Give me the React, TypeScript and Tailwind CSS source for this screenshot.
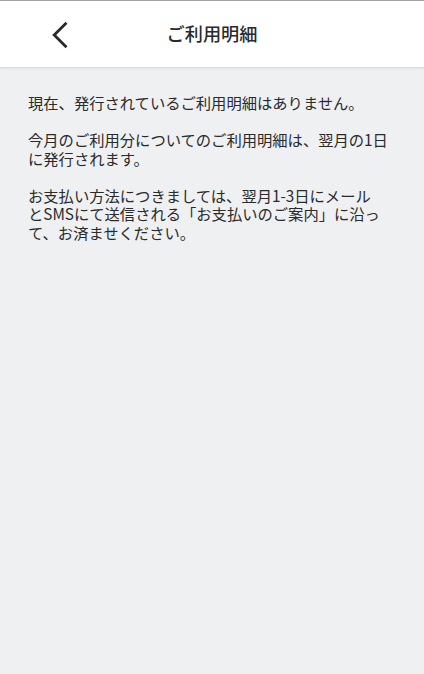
import React from "react";

export default function App() {
  const font = {
    fontFamily: '"Noto Sans CJK JP", "Noto Sans", sans-serif',
  };

  return (
    <div className="min-h-[674px] flex flex-col bg-[#eff0f2]" style={font}>
      {/* header */}
      <header className="h-[68px] bg-white border-t border-[#a3a3a3] border-b border-b-[#dcdcdc] shadow-[0_1px_2px_rgba(0,0,0,0.06)] relative flex items-center justify-center">
        <button className="absolute left-[50px] top-[19px] w-[20px] h-[30px] flex items-center justify-center">
          <svg width="18" height="28" viewBox="0 0 18 28" fill="none">
            <path
              d="M15.5 1.8 L3.2 14 L15.5 26.2"
              stroke="#2a2a2a"
              strokeWidth="2.8"
              strokeLinecap="butt"
              strokeLinejoin="miter"
            />
          </svg>
        </button>
        <h1 className="text-[18.2px] font-medium text-[#2a2a2a] tracking-normal">
          ご利用明細
        </h1>
      </header>

      {/* body */}
      <main className="flex-1 px-[28px] pt-[25px] flex flex-col gap-[18.5px] text-[15.3px] leading-[18.5px] text-[#2a2a2a]">
        <p>現在、発行されているご利用明細はありません。</p>
        <p>
          今月のご利用分についてのご利用明細は、翌月の1日
          <br />
          に発行されます。
        </p>
        <p>
          お支払い方法につきましては、翌月1-3日にメール
          <br />
          とSMSにて送信される「お支払いのご案内」に沿っ
          <br />
          て、お済ませください。
        </p>
      </main>
    </div>
  );
}
